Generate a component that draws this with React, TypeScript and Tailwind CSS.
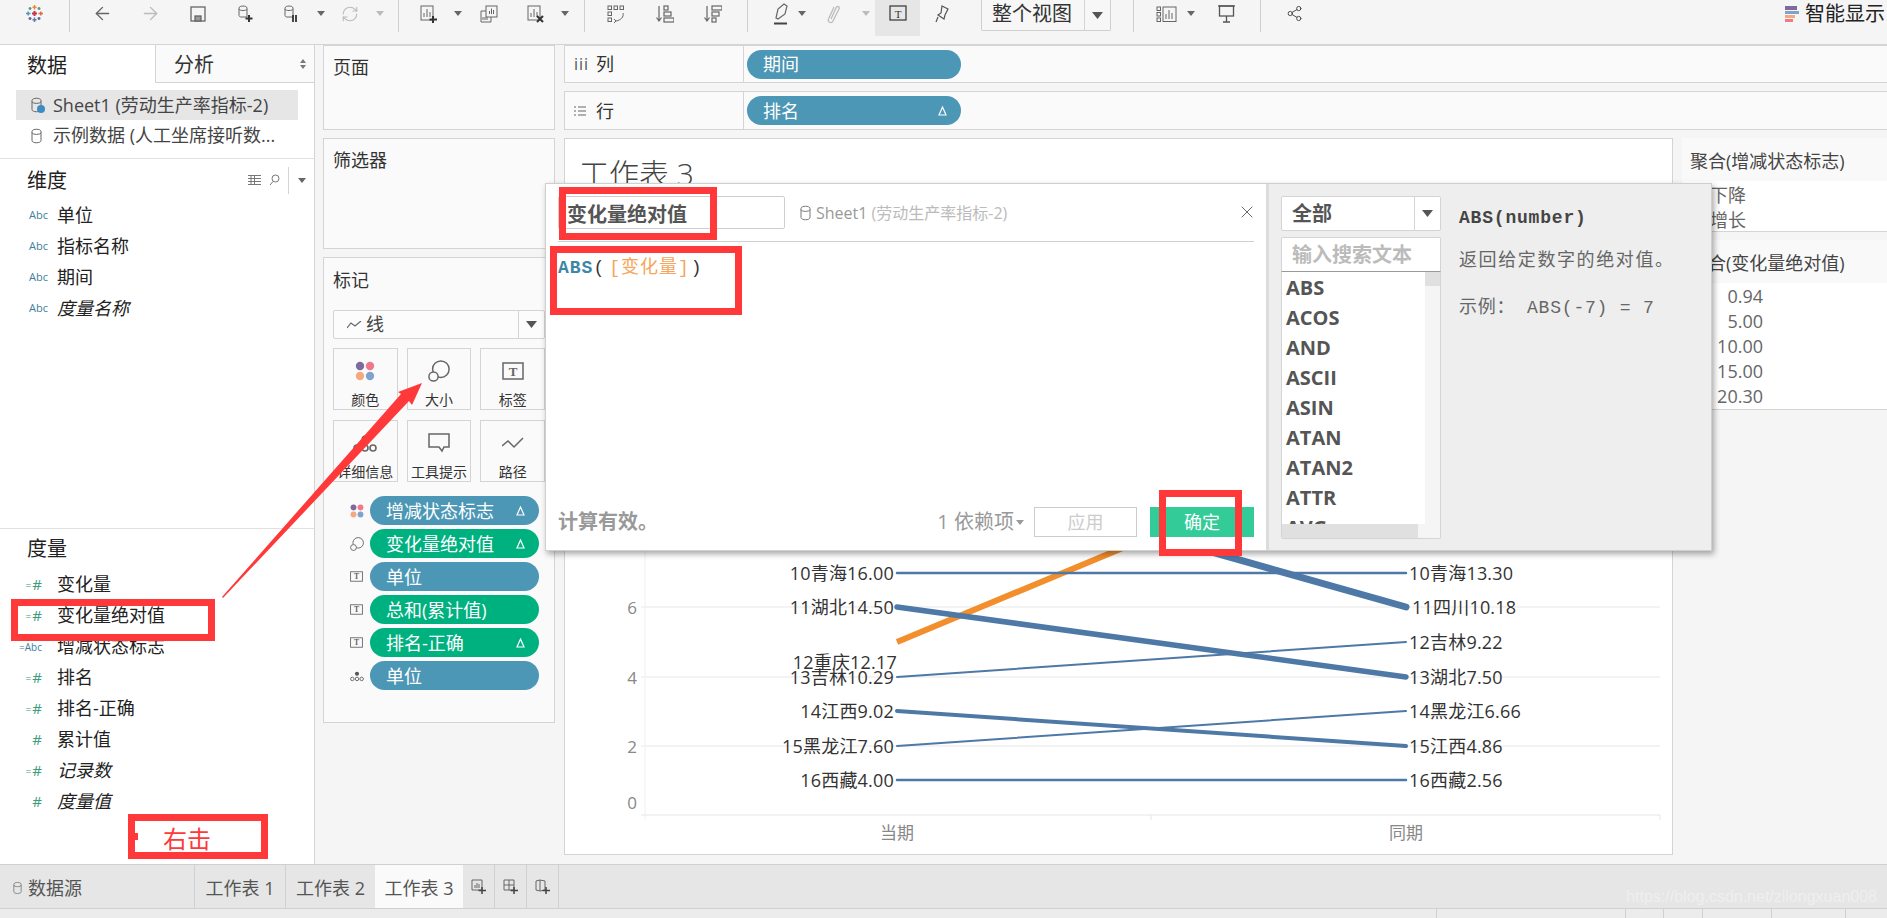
import { ArrowLeft, ArrowRight, RefreshCw, Share2, X } from "lucide-react";

const dims = ["单位", "指标名称", "期间", "度量名称"];

const measures = [
  { icon: "=#", name: "变化量" },
  { icon: "=#", name: "变化量绝对值" },
  { icon: "=Abc", name: "增减状态标志" },
  { icon: "=#", name: "排名" },
  { icon: "=#", name: "排名-正确" },
  { icon: "#", name: "累计值" },
  { icon: "=#", name: "记录数", italic: true },
  { icon: "#", name: "度量值", italic: true },
];

const funcs = ["ABS", "ACOS", "AND", "ASCII", "ASIN", "ATAN", "ATAN2", "ATTR", "AVG"];

const lines = [
  { y1: 573, y2: 573, w: 2.5, left: "10青海16.00", right: "10青海13.30" },
  { y1: 607, y2: 677, w: 5.5, left: "11湖北14.50", right: "13湖北7.50" },
  { y1: 677, y2: 642, w: 2, left: "13吉林10.29", right: "12吉林9.22" },
  { y1: 711, y2: 746, w: 4, left: "14江西9.02", right: "15江西4.86" },
  { y1: 746, y2: 711, w: 2, left: "15黑龙江7.60", right: "14黑龙江6.66" },
  { y1: 780, y2: 780, w: 2.5, left: "16西藏4.00", right: "16西藏2.56" },
];

const Cyl = ({ className = "" }: { className?: string }) => (
  <svg width="11" height="16" viewBox="0 0 11 16" fill="none" stroke="currentColor" className={className}>
    <path d="M1 3.5c0-3 9-3 9 0v9c0 3-9 3-9 0z" />
    <path d="M1 4.5c0 2.5 9 2.5 9 0" />
  </svg>
);

const Caret = ({ color = "#666" }: { color?: string }) => (
  <svg width="8" height="5" viewBox="0 0 8 5">
    <path d="M0 0h8L4 5z" fill={color} />
  </svg>
);

const Sep = () => <div className="w-px h-[32px] bg-[#cfcfcf]" />;

const Dots = ({ size = 24 }: { size?: number }) => (
  <svg width={size} height={size} viewBox="0 0 24 24">
    <circle cx="6" cy="6" r="5" fill="#7f6a9c" />
    <circle cx="18" cy="6" r="5" fill="#f0788a" />
    <circle cx="6" cy="18" r="5" fill="#f4a97f" />
    <circle cx="18" cy="18" r="5" fill="#7fa3cc" />
  </svg>
);

const SizeIcon = ({ size = 24 }: { size?: number }) => (
  <svg width={size} height={size} viewBox="0 0 24 24" fill="none" stroke="#666" strokeWidth="1.6">
    <circle cx="14" cy="10" r="9" />
    <circle cx="6" cy="18" r="5" fill="#fafafa" />
  </svg>
);

const TBox = ({ w = 22, h = 18 }: { w?: number; h?: number }) => (
  <svg width={w} height={h} viewBox="0 0 22 18">
    <rect x="1" y="1" width="20" height="16" fill="none" stroke="#666" strokeWidth="1.5" />
    <text x="11" y="14" textAnchor="middle" fontSize="13" fontWeight="700" fontFamily="Liberation Serif" fill="#666">
      T
    </text>
  </svg>
);

const Nodes = ({ size = 18 }: { size?: number }) => (
  <svg width={size} height={size} viewBox="0 0 24 18" fill="none" stroke="#666" strokeWidth="1.6">
    <circle cx="12" cy="5" r="3.5" fill="#555" stroke="none" />
    <circle cx="4" cy="14" r="3" />
    <circle cx="12" cy="14" r="3" />
    <circle cx="20" cy="14" r="3" />
  </svg>
);

const MarkButton = ({ label, children }: { label: string; children: React.ReactNode }) => (
  <div className="h-[62px] border border-[#d4d4d4] flex flex-col items-center">
    <div className="h-[42px] pt-[2px] flex items-center justify-center">{children}</div>
    <span className="text-[14px] leading-[18px] text-[#333] whitespace-nowrap">{label}</span>
  </div>
);

const Pill = ({ green, label, delta, className = "" }: { green?: boolean; label: string; delta?: boolean; className?: string }) => (
  <div
    className={`h-[29px] rounded-full flex items-center justify-between pl-[16px] pr-[14px] text-white text-[18px] leading-none ${
      green ? "bg-[#00b180]" : "bg-[#4b97b5]"
    } ${className}`}
  >
    <span className="whitespace-nowrap">{label}</span>
    {delta && (
      <svg width="9" height="10" viewBox="0 0 9 10" fill="none" stroke="white" strokeWidth="1.2">
        <path d="M4.5 1L8 9H1z" />
      </svg>
    )}
  </div>
);

const RedBox = ({ className }: { className: string }) => <div className={`absolute border-[7px] border-[#ff3939] ${className}`} />;

const Toolbar = () => (
  <div className="h-[45px] border-b border-[#d4d4d4] flex items-start text-[#666] shrink-0">
    <div className="w-[69px] h-[27px] flex items-center justify-center">
      <svg width="17" height="17" viewBox="0 0 17 17" strokeWidth="1.5" fill="none">
        <path d="M8.5 6v5M6 8.5h5" stroke="#c8354a" strokeWidth="2" />
        <path d="M8.5 0v4.5M6.5 2.2h4" stroke="#e8883a" />
        <path d="M8.5 12.5V17M6.5 14.8h4" stroke="#5b7fa8" />
        <path d="M0 8.5h4.5M2.2 6.5v4" stroke="#4d9bb5" />
        <path d="M12.5 8.5H17M14.8 6.5v4" stroke="#e0683f" />
        <path d="M4 2v3M2.5 3.5h3M13 2v3M11.5 3.5h3" stroke="#5a9c8b" />
        <path d="M4 12v3M2.5 13.5h3M13 12v3M11.5 13.5h3" stroke="#5c6692" />
      </svg>
    </div>
    <Sep />
    <div className="ml-[8px] w-[48px] h-[27px] flex items-center justify-center">
      <ArrowLeft size={21} strokeWidth={1.6} />
    </div>
    <div className="w-[48px] h-[27px] flex items-center justify-center text-[#bbb]">
      <ArrowRight size={21} strokeWidth={1.6} />
    </div>
    <div className="w-[48px] h-[27px] flex items-center justify-center">
      <svg width="16" height="16" viewBox="0 0 16 16" fill="none" stroke="#666" strokeWidth="1.3">
        <rect x="1" y="1" width="14" height="14" />
        <rect x="5" y="10" width="6" height="5" fill="#999" />
      </svg>
    </div>
    <div className="w-[48px] h-[27px] flex items-center justify-center">
      <svg width="16" height="18" viewBox="0 0 16 18" fill="none" stroke="#666">
        <path d="M1 3c0-2.6 8-2.6 8 0v9H3c-1 0-2-.6-2-1.5z" />
        <path d="M1 4c0 2 8 2 8 0" />
        <path d="M11 10v7M7.5 13.5h7" stroke="#333" strokeWidth="2" />
      </svg>
    </div>
    <div className="w-[42px] h-[27px] flex items-center justify-center">
      <svg width="14" height="18" viewBox="0 0 14 18" fill="none" stroke="#666">
        <path d="M1 3c0-2.6 8-2.6 8 0v9H3c-1 0-2-.6-2-1.5z" />
        <path d="M1 4c0 2 8 2 8 0" />
        <path d="M9 10v7M12 10v7" stroke="#333" strokeWidth="1.8" />
      </svg>
    </div>
    <div className="w-[18px] h-[27px] flex items-center justify-center">
      <Caret />
    </div>
    <div className="w-[40px] h-[27px] flex items-center justify-center text-[#bbb]">
      <RefreshCw size={18} strokeWidth={1.5} />
    </div>
    <div className="w-[20px] h-[27px] flex items-center justify-center">
      <Caret color="#bbb" />
    </div>
    <div className="ml-[8px]">
      <Sep />
    </div>
    <div className="ml-[9px] w-[42px] h-[27px] flex items-center justify-center">
      <svg width="18" height="18" viewBox="0 0 18 18" fill="none" stroke="#666">
        <rect x="1" y="1" width="12" height="14" />
        <path d="M4 12V8M7 12V4M10 12V7" />
        <path d="M13 11v7M9.5 14.5h7.5" stroke="#333" strokeWidth="2" />
      </svg>
    </div>
    <div className="w-[16px] h-[27px] flex items-center justify-center">
      <Caret />
    </div>
    <div className="w-[46px] h-[27px] flex items-center justify-center">
      <svg width="18" height="18" viewBox="0 0 18 18" fill="none" stroke="#666">
        <rect x="6" y="1" width="11" height="11" fill="#f5f5f5" />
        <path d="M9.5 9V6M11.5 9V3.5M13.5 9V5" />
        <path d="M6 6H1v11h10v-5" />
        <path d="M3 15v-3M5 15v-3M7 15v-3" />
      </svg>
    </div>
    <div className="w-[48px] h-[27px] flex items-center justify-center">
      <svg width="18" height="18" viewBox="0 0 18 18" fill="none" stroke="#666">
        <rect x="1" y="1" width="12" height="14" />
        <path d="M4 12V8M7 12V4M10 12V7" />
        <path d="M10 11l6 6M16 11l-6 6" stroke="#333" strokeWidth="2" />
      </svg>
    </div>
    <div className="w-[10px] h-[27px] flex items-center justify-center">
      <Caret />
    </div>
    <div className="ml-[14px]">
      <Sep />
    </div>
    <div className="ml-[7px] w-[48px] h-[27px] flex items-center justify-center">
      <svg width="18" height="18" viewBox="0 0 18 18" fill="none" stroke="#666">
        <rect x="1" y="1" width="3.5" height="3.5" />
        <rect x="7" y="1" width="3.5" height="3.5" />
        <rect x="13" y="1" width="3.5" height="3.5" />
        <rect x="1" y="7" width="3.5" height="3.5" />
        <rect x="1" y="13" width="3.5" height="3.5" />
        <path d="M16 8c1 4-2 7-7 8M7 14l2 2-2 2" />
      </svg>
    </div>
    <div className="w-[48px] h-[27px] flex items-center justify-center ml-[1px]">
      <svg width="18" height="18" viewBox="0 0 18 18" fill="none" stroke="#666" strokeWidth="1.2">
        <path d="M3 1v14M0.5 12.5L3 16l2.5-3.5" />
        <rect x="8" y="1" width="4" height="4" />
        <rect x="8" y="7" width="7" height="4" />
        <rect x="8" y="13" width="10" height="4" />
      </svg>
    </div>
    <div className="w-[48px] h-[27px] flex items-center justify-center">
      <svg width="18" height="18" viewBox="0 0 18 18" fill="none" stroke="#666" strokeWidth="1.2">
        <path d="M3 1v14M0.5 12.5L3 16l2.5-3.5" />
        <rect x="8" y="1" width="10" height="4" />
        <rect x="8" y="7" width="7" height="4" />
        <rect x="8" y="13" width="4" height="4" />
      </svg>
    </div>
    <div className="ml-[10px]">
      <Sep />
    </div>
    <div className="ml-[21px] w-[24px] h-[27px] flex items-center justify-center">
      <svg width="14" height="22" viewBox="0 0 14 22" fill="none" stroke="#666" strokeWidth="1.2">
        <path d="M2 15L4 6l6-5 3 2-2 8-7 5z" />
        <path d="M0 20.5h13" stroke="#444" strokeWidth="2" />
      </svg>
    </div>
    <div className="ml-[1px] w-[16px] h-[27px] flex items-center justify-center">
      <Caret />
    </div>
    <div className="ml-[8px] w-[30px] h-[27px] flex items-center justify-center text-[#bbb]">
      <svg width="13" height="20" viewBox="0 0 13 20" fill="none" stroke="#bbb" strokeWidth="1.3">
        <path d="M4 15l5-11c1-3 4-1 3 1L6 17c-1.5 3-6 1-4.500-2L7 3" />
      </svg>
    </div>
    <div className="ml-[12px] w-[11px] h-[27px] flex items-center justify-center">
      <Caret color="#bbb" />
    </div>
    <div className="ml-[4px] w-[45px] h-[36px] bg-[#e6e6e6] flex items-start justify-center pt-[5px]">
      <svg width="18" height="16" viewBox="0 0 18 16">
        <rect x="1" y="1" width="16" height="14" fill="none" stroke="#333" strokeWidth="1.2" />
        <text x="9" y="12.5" textAnchor="middle" fontSize="11" fontFamily="Liberation Serif" fill="#333">
          T
        </text>
      </svg>
    </div>
    <div className="w-[44px] h-[27px] flex items-center justify-center">
      <svg width="14" height="18" viewBox="0 0 14 18" fill="none" stroke="#555" strokeWidth="1.2">
        <path d="M7 1l6 3-3 6-1 4-6-4 3-2z" />
        <path d="M3 12l-2 5" />
      </svg>
    </div>
    <div className="ml-[17px] w-[130px] h-[31px] border border-t-0 border-[#cfcfcf] rounded-b-[2px] flex bg-[#f7f7f7]">
      <span className="flex-1 text-[20px] text-[#333] leading-[28px] pl-[10px] whitespace-nowrap">整个视图</span>
      <div className="w-[26px] border-l border-[#d4d4d4] flex items-center justify-center">
        <svg width="11" height="7" viewBox="0 0 11 7">
          <path d="M0 0h11L5.5 7z" fill="#555" />
        </svg>
      </div>
    </div>
    <div className="ml-[22px]">
      <Sep />
    </div>
    <div className="ml-[15px] w-[34px] h-[27px] flex items-center justify-center">
      <svg width="21" height="16" viewBox="0 0 21 16" fill="none" stroke="#666">
        <rect x="1" y="1" width="3.5" height="3.5" />
        <rect x="1" y="6.5" width="3.5" height="3.5" />
        <rect x="1" y="12" width="3.5" height="3.5" />
        <rect x="7" y="1" width="13" height="14.5" />
        <path d="M10 13V8M13 13V4M16 13V7" />
      </svg>
    </div>
    <div className="w-[16px] h-[27px] flex items-center justify-center">
      <Caret />
    </div>
    <div className="ml-[9px] w-[36px] h-[27px] flex items-center justify-center">
      <svg width="17" height="18" viewBox="0 0 17 18" fill="none" stroke="#555" strokeWidth="1.3">
        <path d="M0 1h17" />
        <rect x="1.5" y="1" width="14" height="10" />
        <path d="M8.5 11v6M5 17h7" />
      </svg>
    </div>
    <div className="ml-[16px]">
      <Sep />
    </div>
    <div className="ml-[23px] w-[20px] h-[27px] flex items-center justify-center text-[#444]">
      <Share2 size={17} strokeWidth={1.3} />
    </div>
    <div className="ml-auto h-[27px] flex items-center pr-[2px] gap-[6px]">
      <svg width="14" height="16" viewBox="0 0 14 16">
        <rect width="12" height="4" fill="#7f6a9c" />
        <rect y="5" width="14" height="3" fill="#7fa3cc" />
        <rect y="9" width="10" height="3" fill="#f4a97f" />
        <rect y="13" width="8" height="3" fill="#f0788a" />
      </svg>
      <span className="text-[20px] text-[#222] whitespace-nowrap">智能显示</span>
    </div>
  </div>
);

const Sidebar = () => (
  <div className="w-[315px] shrink-0 bg-white border-r border-[#d4d4d4] flex flex-col">
    <div className="h-[38px] flex shrink-0">
      <div className="w-[155px] pl-[27px] text-[20px] leading-[42px] text-[#222]">数据</div>
      <div className="flex-1 bg-[#fafafa] border-l border-b border-[#d4d4d4] pl-[18px] pr-[8px] flex items-center justify-between">
        <span className="text-[20px] text-[#333] pt-[3px]">分析</span>
        <svg width="6" height="10" viewBox="0 0 6 10" fill="#777">
          <path d="M3 0l3 4H0zM3 10L0 6h6z" />
        </svg>
      </div>
    </div>
    <div className="mt-[7px] mx-[16px] h-[30px] bg-[#e6e6e6] flex items-center pl-[15px] text-[18px] text-[#444] whitespace-nowrap">
      <span className="relative w-[22px] text-[#666]">
        <Cyl />
        <span className="absolute left-[6px] top-[8px] w-[8px] h-[8px] rounded-full bg-[#3b8cc4]" />
      </span>
      <span>Sheet1 (劳动生产率指标-2)</span>
    </div>
    <div className="mx-[16px] h-[31px] flex items-center pl-[15px] text-[18px] text-[#444] whitespace-nowrap">
      <span className="w-[22px] text-[#666]">
        <Cyl />
      </span>
      <span>示例数据 (人工坐席接听数...</span>
    </div>
    <div className="mt-[7px] border-t border-[#e0e0e0] h-[43px] flex items-center pl-[27px] pr-[8px]">
      <span className="text-[20px] text-[#222] pt-[1px]">维度</span>
      <svg className="ml-auto" width="13" height="10" viewBox="0 0 13 10" stroke="#777" strokeWidth="1">
        <path d="M0 .5h13M0 3.5h13M0 6.5h13M0 9.5h13M3 0v10M6.5 0v10" />
      </svg>
      <svg className="ml-[8px]" width="11" height="12" viewBox="0 0 11 12" fill="none" stroke="#777">
        <circle cx="6.5" cy="4.5" r="3.5" />
        <path d="M4 7.5L1 11" />
      </svg>
      <div className="ml-[8px] w-px h-[27px] bg-[#d4d4d4]" />
      <span className="ml-[9px]">
        <Caret />
      </span>
    </div>
    <div className="mt-[-1px]">
      {dims.map((d, i) => (
        <div key={d} className="h-[31px] flex items-center pl-[29px] text-[18px] text-[#222]">
          <span className="w-[28px] text-[11px] text-[#3d7f9c]">Abc</span>
          <span className={i === 3 ? "italic" : ""}>{d}</span>
        </div>
      ))}
    </div>
    <div className="mt-auto h-[336px] border-t border-[#e0e0e0] shrink-0">
      <div className="h-[40px] pl-[27px] flex items-center text-[20px] text-[#222]">度量</div>
      {measures.map((m) => (
        <div key={m.name} className="h-[31px] flex items-center text-[18px] text-[#222]">
          <span className="w-[43px] pr-[1px] flex items-center justify-end text-[#3d9c7f] leading-none whitespace-nowrap">
            {m.icon === "=Abc" && <span className="text-[#3d7f9c] text-[10px]">=Abc</span>}
            {m.icon === "=#" && <span className="text-[10px] mr-[1px]">=</span>}
            {m.icon !== "=Abc" && <span className="text-[15px]">#</span>}
          </span>
          <span className={`ml-[14px] ${m.italic ? "italic" : ""}`}>{m.name}</span>
        </div>
      ))}
    </div>
  </div>
);

const ShelfCol = () => (
  <div className="w-[232px] ml-[8px] shrink-0 flex flex-col gap-[8px]">
    <div className="h-[85px] bg-[#fafafa] border border-[#d4d4d4] pl-[9px] pt-[8px] text-[18px] text-[#333]">页面</div>
    <div className="h-[111px] bg-[#fafafa] border border-[#d4d4d4] pl-[9px] pt-[8px] text-[18px] text-[#333]">筛选器</div>
    <div className="h-[466px] bg-[#fafafa] border border-[#d4d4d4] pl-[9px] pt-[9px]">
      <div className="text-[18px] text-[#333] leading-[27px]">标记</div>
      <div className="mt-[16px] w-[212px] h-[29px] border border-[#d4d4d4] rounded-[2px] bg-[#fcfcfc] flex items-center">
        <svg className="ml-[13px]" width="15" height="8" viewBox="0 0 15 8" fill="none" stroke="#666" strokeWidth="1.2">
          <path d="M0 7l4-5 4 3 6-5" />
        </svg>
        <span className="ml-[4px] text-[18px] text-[#444]">线</span>
        <div className="ml-auto w-[26px] h-full border-l border-[#d4d4d4] flex items-center justify-center">
          <svg width="11" height="7" viewBox="0 0 11 7">
            <path d="M0 0h11L5.5 7z" fill="#555" />
          </svg>
        </div>
      </div>
      <div className="mt-[9px] grid grid-cols-3 gap-x-[9px] gap-y-[10px] w-[212px]">
        <MarkButton label="颜色">
          <Dots size={20} />
        </MarkButton>
        <MarkButton label="大小">
          <SizeIcon size={22} />
        </MarkButton>
        <MarkButton label="标签">
          <TBox />
        </MarkButton>
        <MarkButton label="详细信息">
          <Nodes size={24} />
        </MarkButton>
        <MarkButton label="工具提示">
          <svg width="22" height="20" viewBox="0 0 22 20" fill="none" stroke="#666" strokeWidth="1.5">
            <path d="M1 1h20v13h-5l-2 4-3-4H1z" />
          </svg>
        </MarkButton>
        <MarkButton label="路径">
          <svg width="22" height="12" viewBox="0 0 22 12" fill="none" stroke="#666" strokeWidth="1.5">
            <path d="M0 9l6-5 6 6 9-9" />
          </svg>
        </MarkButton>
      </div>
      <div className="mt-[14px] flex flex-col gap-[4px]">
        {[
          { icon: <Dots size={14} />, label: "增减状态标志", delta: true },
          { icon: <SizeIcon size={14} />, label: "变化量绝对值", delta: true, green: true },
          { icon: <TBox w={13} h={11} />, label: "单位" },
          { icon: <TBox w={13} h={11} />, label: "总和(累计值)", green: true },
          { icon: <TBox w={13} h={11} />, label: "排名-正确", delta: true, green: true },
          { icon: <Nodes size={14} />, label: "单位" },
        ].map((p, i) => (
          <div key={i} className="flex items-center">
            <div className="w-[37px] pl-[17px] flex items-center">{p.icon}</div>
            <Pill label={p.label} delta={p.delta} green={p.green} className="w-[169px]" />
          </div>
        ))}
      </div>
    </div>
  </div>
);

const Chart = () => (
  <svg width="1107" height="303" viewBox="564 551 1107 303" className="block mt-auto text-[18px]">
    {[607, 677, 746].map((y) => (
      <g key={y}>
        <line x1="640" x2="1659" y1={y} y2={y} stroke="#efefef" strokeWidth="1.5" />
        <text x="636" y={y + 7} textAnchor="end" fill="#888" fontSize="17">
          {y === 607 ? 6 : y === 677 ? 4 : 2}
        </text>
      </g>
    ))}
    <text x="636" y="809" textAnchor="end" fill="#888" fontSize="17">
      0
    </text>
    <line x1="644" x2="644" y1="551" y2="820" stroke="#f0f0f0" />
    <line x1="640" x2="1659" y1="815" y2="815" stroke="#e6e6e6" />
    <line x1="1150" x2="1150" y1="815" y2="820" stroke="#e6e6e6" />
    <line x1="1659" x2="1659" y1="815" y2="820" stroke="#e6e6e6" />
    <line x1="896" y1="642" x2="1405" y2="430" stroke="#f28e2b" strokeWidth="6" />
    <line x1="896" y1="463" x2="1405" y2="607" stroke="#4e79a7" strokeWidth="7" strokeLinecap="round" />
    {lines.map((l) => (
      <g key={l.left}>
        <line x1="896" y1={l.y1} x2="1405" y2={l.y2} stroke="#4e79a7" strokeWidth={l.w} strokeLinecap="round" />
        <text x="893" y={l.y1 + 7} textAnchor="end" fill="#333" letterSpacing="0.2">
          {l.left}
        </text>
        <text x="1408" y={l.y2 + 7} fill="#333" letterSpacing="0.2">
          {l.right}
        </text>
      </g>
    ))}
    <text x="896" y="669" textAnchor="end" fill="#333" letterSpacing="0.2">
      12重庆12.17
    </text>
    <text x="1411" y="614" fill="#333" letterSpacing="0.2">
      11四川10.18
    </text>
    <text x="896" y="839" textAnchor="middle" fill="#888" fontSize="17">
      当期
    </text>
    <text x="1405" y="839" textAnchor="middle" fill="#888" fontSize="17">
      同期
    </text>
  </svg>
);

const Legends = () => (
  <div className="w-[206px] ml-[9px] shrink-0 flex flex-col">
    <div className="h-[43px] bg-[#f9f9f9] pl-[8px] pt-[3px] flex items-center text-[18px] text-[#444] whitespace-nowrap">聚合(增减状态标志)</div>
    <div className="h-[51px] bg-white border-b border-[#d4d4d4] pl-[28px] text-[18px] leading-[25px] text-[#666] pt-[2px]">
      <div>下降</div>
      <div>增长</div>
    </div>
    <div className="mt-[8px] h-[43px] bg-[#f9f9f9] pl-[8px] pt-[3px] flex items-center text-[18px] text-[#444] whitespace-nowrap">聚合(变化量绝对值)</div>
    <div className="h-[127px] bg-white border-b border-[#d4d4d4] text-[18px] leading-[25px] text-[#666] w-full pt-[1px]">
      {["0.94", "5.00", "10.00", "15.00", "20.30"].map((v) => (
        <div key={v} className="w-[81px] text-right">
          {v}
        </div>
      ))}
    </div>
  </div>
);

const Dialog = () => (
  <div className="absolute left-[545px] top-[183px] w-[1167px] h-[368px] flex bg-white border border-[#cfcfcf] shadow-[2px_3px_6px_rgba(0,0,0,0.35)]">
    <div className="w-[720px] shrink-0 px-[12px] pt-[12px] flex flex-col">
      <div className="h-[46px] border-b border-[#d0d0d0] flex items-start">
        <div className="w-[227px] h-[33px] border border-[#cfcfcf] rounded-[2px] pl-[8px] text-[20px] leading-[35px] font-bold text-[#555]">
          变化量绝对值
        </div>
        <div className="ml-[15px] h-[33px] flex items-center text-[16px] text-[#999] whitespace-nowrap">
          <Cyl className="text-[#777]" />
          <span className="ml-[5px]">
            Sheet1 <span className="text-[#bbb]">(劳动生产率指标-2)</span>
          </span>
        </div>
        <X className="ml-auto mt-[6px] mr-[-3px] text-[#666]" size={20} strokeWidth={1.2} />
      </div>
      <div className="mt-[11px] h-[30px] flex items-center whitespace-pre text-[18px] text-[#333] [font-family:'Liberation_Mono','Noto_Sans_CJK_SC',monospace] tracking-[1px]">
        <span className="font-bold text-[#3d86a6]">ABS</span>
        <span>(</span>
        <span className="ml-[4px] text-[#f5a65b]">[变化量]</span>
        <span className="ml-[1px]">)</span>
      </div>
      <div className="mt-auto h-[48px] mb-[4px] flex items-center justify-between">
        <span className="text-[20px] font-bold text-[#999]">计算有效。</span>
        <div className="flex items-center">
          <span className="text-[20px] text-[#999] whitespace-nowrap">1 依赖项</span>
          <span className="ml-[2px]">
            <Caret color="#999" />
          </span>
          <div className="ml-[10px] w-[103px] h-[30px] border border-[#ccc] text-[18px] text-[#ccc] flex items-center justify-center">应用</div>
          <div className="ml-[13px] w-[104px] h-[30px] bg-[#33cc99] text-[18px] text-white flex items-center justify-center">确定</div>
        </div>
      </div>
    </div>
    <div className="w-[3px] bg-[#dcdcdc]" />
    <div className="flex-1 bg-[#eeeeee] pl-[12px] pt-[12px] flex">
      <div className="w-[160px] shrink-0 flex flex-col">
        <div className="h-[35px] border border-[#d4d4d4] rounded-[2px] bg-white flex items-center">
          <span className="flex-1 pl-[10px] text-[20px] font-bold text-[#555]">全部</span>
          <div className="w-[26px] h-full border-l border-[#d4d4d4] flex items-center justify-center">
            <svg width="11" height="7" viewBox="0 0 11 7">
              <path d="M0 0h11L5.5 7z" fill="#555" />
            </svg>
          </div>
        </div>
        <div className="mt-[6px] h-[35px] border border-[#d4d4d4] border-b-[#999] rounded-t-[2px] bg-white pl-[10px] text-[20px] leading-[33px] font-bold text-[#bbb] whitespace-nowrap">
          输入搜索文本
        </div>
        <div className="h-[267px] border border-t-0 border-[#d4d4d4] rounded-b-[2px] bg-white flex flex-col overflow-hidden">
          <div className="h-[252px] flex overflow-hidden">
            <div className="flex-1 pl-[4px] pt-[1px] text-[20px] font-bold text-[#555]">
              {funcs.map((f) => (
                <div key={f} className="h-[30px] leading-[30px]">
                  {f}
                </div>
              ))}
            </div>
            <div className="w-[15px] bg-[#f5f5f5]">
              <div className="h-[14px] bg-[#e0e0e0]" />
            </div>
          </div>
          <div className="flex-1 flex bg-[#f5f5f5]">
            <div className="w-[136px] bg-[#e0e0e0]" />
          </div>
        </div>
      </div>
      <div className="ml-[18px] pt-[10px] text-[#666] whitespace-nowrap">
        <div className="text-[18px] leading-[24px] font-bold text-[#444] [font-family:'Liberation_Mono',monospace] tracking-[0.8px]">ABS(number)</div>
        <div className="mt-[16px] text-[18px] leading-[26px] tracking-[1.6px]">返回给定数字的绝对值。</div>
        <div className="mt-[23px] text-[18px] leading-[26px] [font-family:'Liberation_Mono','Noto_Sans_CJK_SC',monospace] tracking-[0.8px]">示例： ABS(-7) = 7</div>
      </div>
    </div>
  </div>
);

export default function App() {
  return (
    <div className="relative w-[1887px] h-[918px] overflow-hidden bg-[#f5f5f5] flex flex-col [font-family:'Open_Sans','Noto_Sans_CJK_SC',sans-serif]">
      <Toolbar />

      <div className="h-[819px] flex shrink-0">
        <Sidebar />
        <ShelfCol />

        <div className="flex-1 ml-[9px] flex flex-col min-w-0">
          <div className="h-[38px] bg-[#fafafa] border-y border-l border-[#d4d4d4] flex">
            <div className="w-[179px] border-r border-[#d4d4d4] flex items-center pl-[9px] text-[#555]">
              <span className="text-[16px] tracking-[1px] w-[22px]">iii</span>
              <span className="text-[18px] text-[#333] pt-[1px]">列</span>
            </div>
            <div className="pl-[3px] flex items-center">
              <Pill label="期间" className="w-[214px]" />
            </div>
          </div>
          <div className="mt-[8px] h-[39px] bg-[#fafafa] border-y border-l border-[#d4d4d4] flex">
            <div className="w-[179px] border-r border-[#d4d4d4] flex items-center pl-[9px] text-[#555]">
              <svg className="mr-[10px]" width="12" height="10" viewBox="0 0 12 10" stroke="#666">
                <path d="M0 1h2M4 1h8M0 5h2M4 5h8M0 9h2M4 9h8" />
              </svg>
              <span className="text-[18px] text-[#333] pt-[1px]">行</span>
            </div>
            <div className="pl-[3px] flex items-center">
              <Pill label="排名" delta className="w-[214px]" />
            </div>
          </div>
          <div className="mt-[8px] h-[717px] flex">
            <div className="w-[1109px] shrink-0 bg-white border border-[#d4d4d4] flex flex-col">
              <div className="pl-[14px] pt-[15px] text-[30px] font-light leading-[40px] text-[#444]">工作表 3</div>
              <Chart />
            </div>
            <Legends />
          </div>
        </div>
      </div>

      <div className="h-[45px] bg-[#e6e6e6] border-y border-[#d0d0d0] flex shrink-0 text-[18px] text-[#555]">
        <div className="w-[195px] border-r border-[#d0d0d0] flex items-center pl-[13px] pt-[3px] gap-[6px]">
          <Cyl className="text-[#777] w-[9px]" />
          <span>数据源</span>
        </div>
        <div className="w-[91px] border-r border-[#d0d0d0] pt-[3px] flex items-center justify-center">工作表 1</div>
        <div className="w-[89px] pt-[3px] flex items-center justify-center">工作表 2</div>
        <div className="w-[88px] bg-[#fafafa] pt-[3px] flex items-center justify-center">工作表 3</div>
        {[0, 1, 2].map((i) => (
          <div key={i} className="w-[32px] border-r border-[#d0d0d0] flex items-center justify-center">
            <svg width="15" height="15" viewBox="0 0 15 15" fill="none" stroke="#666">
              {i === 0 && <path d="M1 1h10v10H1zM4 9V6M6 9V4M8 9V5" />}
              {i === 1 && <path d="M1 1h10v10H1zM1 6h10M6 1v10" />}
              {i === 2 && <path d="M1 2l4-1 5 1v9l-5 1-4-1zM5 1v11" />}
              <path d="M11 8v7M7.5 11.500H15" stroke="#444" strokeWidth="1.5" />
            </svg>
          </div>
        ))}
        <span className="ml-auto self-end pr-[10px] pb-[1px] text-[16px] leading-[20px] text-[#efefef] [font-family:'Liberation_Sans',sans-serif]">
          https://blog.csdn.net/zilongxuan008
        </span>
      </div>
      <div className="flex-1 flex bg-[#ececec]">
        <div className="w-[1437px] border-r border-[#d0d0d0]" />
        <div className="w-[189px] border-r border-[#d0d0d0]" />
        <div className="w-[38px] border-r border-[#d0d0d0]" />
        <div className="w-[39px] border-r border-[#d0d0d0]" />
        <div className="w-[69px] border-r border-[#d0d0d0]" />
        <div className="w-[74px] border-r border-[#d0d0d0]" />
      </div>

      <Dialog />

      <RedBox className="left-[559px] top-[187px] w-[158px] h-[53px]" />
      <RedBox className="left-[550px] top-[246px] w-[192px] h-[69px]" />
      <RedBox className="left-[1159px] top-[490px] w-[83px] h-[66px]" />
      <RedBox className="left-[11px] top-[599px] w-[204px] h-[42px]" />
      <div className="absolute left-[128px] top-[814px] w-[140px] h-[45px] border-[7px] border-[#ff3939] flex items-center justify-center pr-[22px] pt-[5px] text-[24px] leading-none text-[#ff3939]">
        右击
        <span className="absolute left-0 top-[12px] w-[3px] h-[7px] bg-[#ff3939]" />
      </div>
      <svg className="absolute left-0 top-0 pointer-events-none" width="1887" height="918">
        <path d="M222 597L401 394L398 392L422 383L412 405L409 401L223 598Z" fill="#ff3939" />
      </svg>
    </div>
  );
}
